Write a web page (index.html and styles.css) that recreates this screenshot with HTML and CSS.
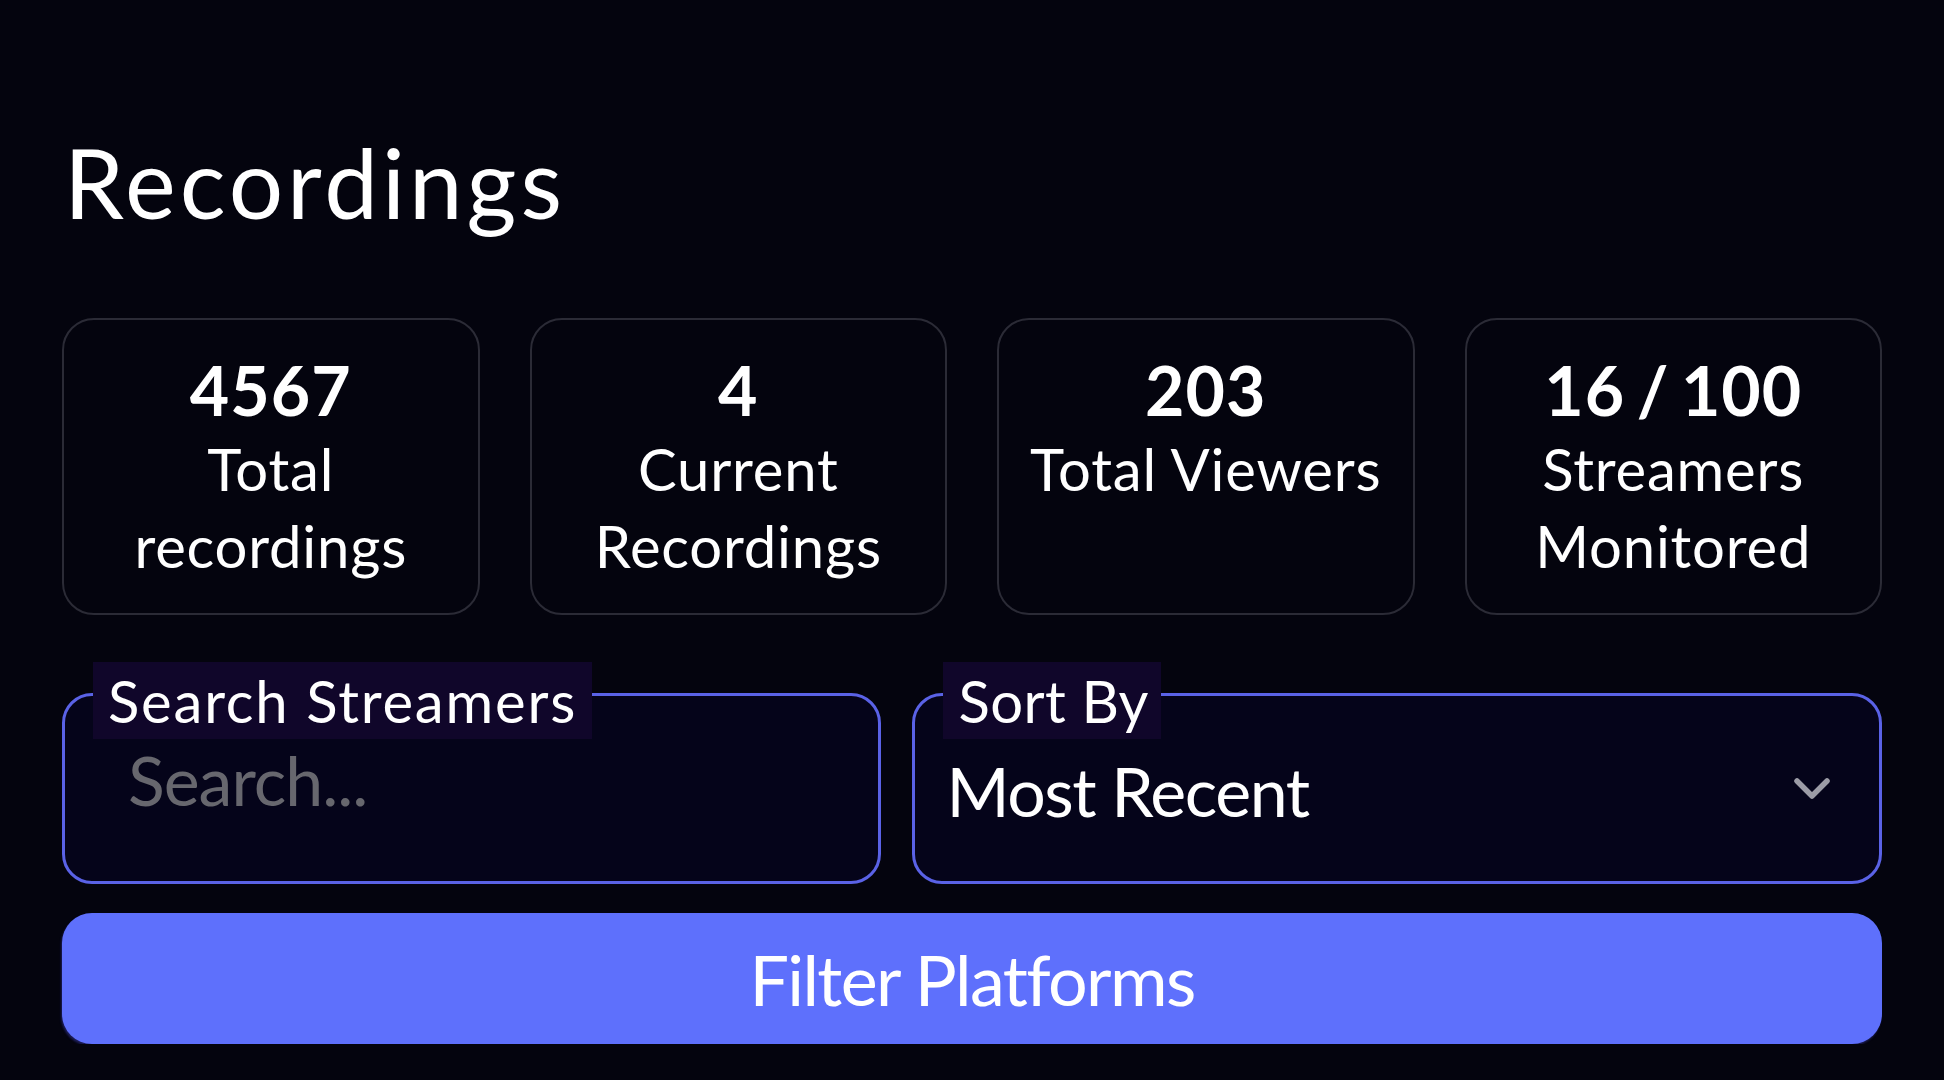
FILE: index.html
```html
<!DOCTYPE html>
<html lang="en">
<head>
<meta charset="utf-8">
<title>Recordings</title>
<link rel="stylesheet" href="styles.css">
</head>
<body>
<main class="page">
  <h1 class="title">Recordings</h1>

  <section class="stats">
    <div class="stat-card">
      <div class="stat-value">4567</div>
      <div class="stat-label">Total<br>recordings</div>
    </div>
    <div class="stat-card">
      <div class="stat-value">4</div>
      <div class="stat-label">Current<br>Recordings</div>
    </div>
    <div class="stat-card">
      <div class="stat-value">203</div>
      <div class="stat-label">Total Viewers</div>
    </div>
    <div class="stat-card">
      <div class="stat-value">16 / 100</div>
      <div class="stat-label">Streamers<br>Monitored</div>
    </div>
  </section>

  <section class="filters">
    <div class="field field-search">
      <span class="field-label">Search Streamers</span>
      <input class="search-input" type="text" placeholder="Search...">
    </div>
    <div class="field field-sort">
      <span class="field-label field-label-sort">Sort By</span>
      <span class="sort-value">Most Recent</span>
      <svg class="chevron" width="38" height="24" viewBox="0 0 38 24" aria-hidden="true">
        <path d="M4 4 L19 19 L34 4" fill="none" stroke="#9c9ca6" stroke-width="5.5" stroke-linecap="round" stroke-linejoin="round"/>
      </svg>
    </div>
  </section>

  <button class="filter-btn" type="button">Filter Platforms</button>
</main>
</body>
</html>
```

FILE: styles.css
```css
html, body {
  margin: 0;
  padding: 0;
  background: #04040e;
  color: #ffffff;
  font-family: "Lato", "Open Sans", sans-serif;
}

.page {
  padding: 0 62px;
  display: flex;
  flex-direction: column;
}

.title {
  margin: 124px 0 0 2px;
  font-size: 96px;
  font-weight: 400;
  line-height: 115px;
  letter-spacing: 4px;
}

.stats {
  margin-top: 79px;
  display: grid;
  grid-template-columns: repeat(4, 1fr);
  gap: 50px;
}

.stat-card {
  height: 297px;
  box-sizing: border-box;
  border: 2px solid #2b2b36;
  border-radius: 32px;
  padding-top: 30px;
  text-align: center;
}

.stat-value {
  font-size: 68px;
  font-weight: 700;
  line-height: 80px;
  letter-spacing: 1px;
  word-spacing: -6px;
}

.stat-label {
  font-size: 58px;
  font-weight: 400;
  line-height: 77px;
  letter-spacing: 0.8px;
}

.filters {
  margin-top: 78px;
  display: grid;
  grid-template-columns: 819fr 969fr;
  gap: 31px;
}

.field {
  position: relative;
  height: 191px;
  box-sizing: border-box;
  border: 3px solid #5a62e6;
  border-radius: 30px;
  background: #05041a;
}

.field-label {
  position: absolute;
  top: -34px;
  left: 28px;
  height: 77px;
  padding: 0 15px;
  background: #10062a;
  font-size: 58px;
  line-height: 77px;
  letter-spacing: 1.8px;
  white-space: nowrap;
}

.field-label-sort {
  letter-spacing: 0.4px;
  padding: 0 12px 0 15px;
}

.field-search {
  padding: 43px 30px 0 63px;
}

.search-input {
  display: block;
  width: 100%;
  box-sizing: border-box;
  height: 82px;
  padding: 0;
  border: 0;
  outline: none;
  background: transparent;
  color: #ffffff;
  font-family: "Lato", "Open Sans", sans-serif;
  font-size: 68px;
  line-height: 82px;
  letter-spacing: -1px;
}

.search-input::placeholder {
  color: #67676e;
}

.field-sort {
  display: flex;
  align-items: center;
  justify-content: space-between;
  padding: 0 48px 0 31px;
}

.sort-value {
  font-size: 68px;
  line-height: 82px;
  margin-top: 4px;
  letter-spacing: -1.4px;
}

.chevron {
  display: block;
}

.filter-btn {
  margin-top: 29px;
  height: 131px;
  border: 0;
  border-radius: 30px;
  background: #5e70fc;
  color: #ffffff;
  font-family: "Lato", "Open Sans", sans-serif;
  font-size: 70px;
  font-weight: 400;
  letter-spacing: -1.6px;
  box-shadow: -1px 2px 2px rgba(40, 40, 120, 0.7);
}
```
